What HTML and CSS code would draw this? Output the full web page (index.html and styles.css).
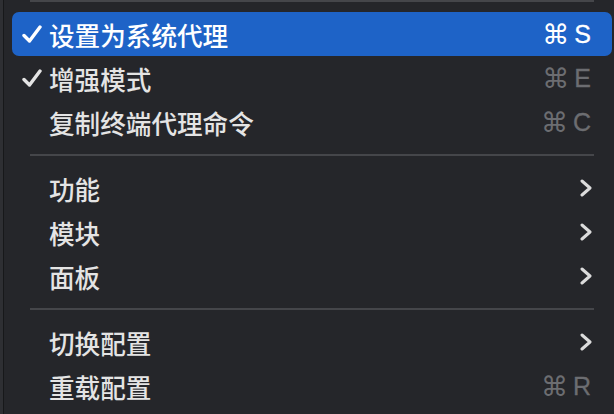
FILE: index.html
```html
<!DOCTYPE html>
<html lang="zh-CN">
<head>
<meta charset="utf-8">
<title>菜单</title>
<link rel="stylesheet" href="styles.css">
</head>
<body>
<div class="menu">
  <div class="sep sep-top"></div>
  <div class="item active">
    <span class="check"><svg viewBox="0 0 20 18" width="20" height="18"><path d="M2 10.5 L7.5 16 L18 2" /></svg></span>
    <span class="label">设置为系统代理</span>
    <span class="key"><span class="cmd">⌘</span><span class="letter">S</span></span>
  </div>
  <div class="item">
    <span class="check"><svg viewBox="0 0 20 18" width="20" height="18"><path d="M2 10.5 L7.5 16 L18 2" /></svg></span>
    <span class="label">增强模式</span>
    <span class="key dim"><span class="cmd">⌘</span><span class="letter">E</span></span>
  </div>
  <div class="item">
    <span class="check"></span>
    <span class="label">复制终端代理命令</span>
    <span class="key dim"><span class="cmd">⌘</span><span class="letter">C</span></span>
  </div>
  <div class="sep"></div>
  <div class="item">
    <span class="check"></span>
    <span class="label">功能</span>
    <span class="chev"><svg viewBox="0 0 12 18" width="12" height="18"><path d="M2 2 L10 9 L2 16" /></svg></span>
  </div>
  <div class="item">
    <span class="check"></span>
    <span class="label">模块</span>
    <span class="chev"><svg viewBox="0 0 12 18" width="12" height="18"><path d="M2 2 L10 9 L2 16" /></svg></span>
  </div>
  <div class="item">
    <span class="check"></span>
    <span class="label">面板</span>
    <span class="chev"><svg viewBox="0 0 12 18" width="12" height="18"><path d="M2 2 L10 9 L2 16" /></svg></span>
  </div>
  <div class="sep"></div>
  <div class="item">
    <span class="check"></span>
    <span class="label">切换配置</span>
    <span class="chev"><svg viewBox="0 0 12 18" width="12" height="18"><path d="M2 2 L10 9 L2 16" /></svg></span>
  </div>
  <div class="item">
    <span class="check"></span>
    <span class="label">重载配置</span>
    <span class="key dim"><span class="cmd">⌘</span><span class="letter">R</span></span>
  </div>
</div>
</body>
</html>
```
FILE: styles.css
```css
html, body {
  margin: 0;
  padding: 0;
}
body {
  width: 614px;
  height: 414px;
  overflow: hidden;
  background: linear-gradient(to right, #2e2f33 0, #2e2f33 3px, #17181a 3px, #17181a 4px, #25262a 4px);
  font-family: "Noto Sans CJK SC", "Noto Sans", sans-serif;
  color: #e4e4e4;
}
.menu {
  display: flex;
  flex-direction: column;
}
.sep {
  height: 22px;
  margin: 0 20px 0 30px;
  display: flex;
  align-items: center;
}
.sep::before {
  content: "";
  display: block;
  width: 100%;
  height: 2px;
  background: #45464a;
}
.sep-top {
  height: 12px;
  align-items: flex-start;
}
.item {
  height: 44px;
  margin: 0 2px 0 12px;
  padding: 0 21px 0 10px;
  display: flex;
  align-items: center;
  border-radius: 7px;
}
.item.active {
  background: #1e63c7;
  color: #ffffff;
}
.check {
  width: 20px;
  height: 18px;
  margin-right: 7px;
  display: flex;
}
.check svg path {
  fill: none;
  stroke: currentColor;
  stroke-width: 3.4;
  stroke-linecap: round;
  stroke-linejoin: round;
}
.label {
  flex: 1;
  font-size: 25.6px;
  font-weight: 500;
  line-height: 1;
  padding-top: 1px;
}
.key {
  display: flex;
  align-items: center;
  gap: 5px;
}
.key.dim {
  color: #6c6d71;
}
.cmd {
  font-family: "DejaVu Sans", sans-serif;
  font-size: 27px;
  line-height: 1;
}
.letter {
  font-family: "Liberation Sans", "Noto Sans", sans-serif;
  font-size: 25px;
  line-height: 1;
  -webkit-text-stroke: 0.3px currentColor;
}
.chev {
  display: flex;
  margin-right: -1px;
  color: #dcdcdc;
}
.chev svg path {
  fill: none;
  stroke: currentColor;
  stroke-width: 3;
  stroke-linecap: round;
  stroke-linejoin: round;
}
```
